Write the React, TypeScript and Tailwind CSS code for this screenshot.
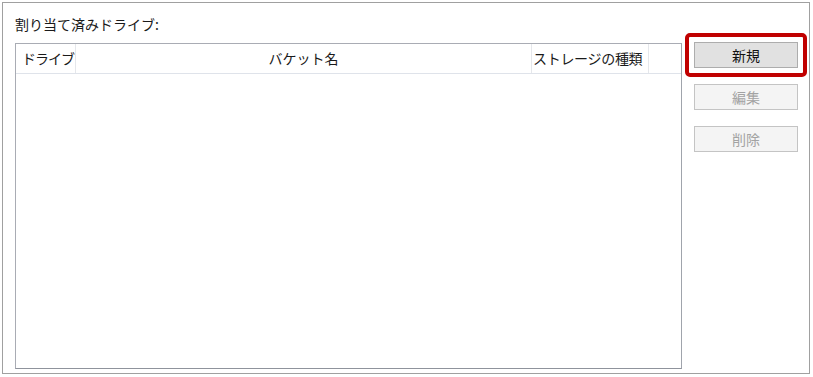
const font = { fontFamily: '"Noto Sans CJK JP", "Noto Sans", sans-serif' };

function Button({ label, disabled }: { label: string; disabled?: boolean }) {
  return (
    <div
      className={
        'flex h-[26px] w-[104px] items-center justify-center border text-[14px] ' +
        (disabled ? 'border-[#c4c4c4] bg-[#f4f4f4] text-[#a3a3a3]' : 'border-[#adadad] bg-[#e1e1e1] text-[#111]')
      }
    >
      {label}
    </div>
  );
}

export default function App() {
  return (
    <div className="h-[377px] w-[813px] bg-white pl-[2px] pt-[2px]" style={font}>
      <div className="flex h-[372px] w-[808px] border border-[#a0a0a0]">
        <div className="flex w-[680px] flex-col pl-[12px]">
          <div className="h-[40px] pt-[10px] text-[14px] leading-[22px] text-[#1a1a1a]">割り当て済みドライブ:</div>
          <div className="h-[326px] w-[667px] border border-[#a9acb4] border-b-[#8f939c] border-r-[#a0a4ac] bg-white">
            <div className="flex h-[30px] whitespace-nowrap border-b border-[#dfe3ea] bg-white text-[14px] leading-[29px] text-[#1a1a1a]">
              <div className="w-[60px] border-r border-[#e5e7eb] pl-[6px] tracking-[-1px]">ドライブ</div>
              <div className="w-[456px] border-r border-[#e5e7eb] text-center">バケット名</div>
              <div className="w-[117px] border-r border-[#e5e7eb] pl-[1px] tracking-[-0.3px]">ストレージの種類</div>
            </div>
          </div>
        </div>
        <div className="flex flex-col pl-[2px] pt-[30px]">
          <div className="rounded-[5px] border-[4px] border-[#c00000] px-[5px] py-[5px]">
            <Button label="新規" />
          </div>
          <div className="flex flex-col gap-[16px] pl-[9px] pt-[7px]">
            <Button label="編集" disabled />
            <Button label="削除" disabled />
          </div>
        </div>
      </div>
    </div>
  );
}
